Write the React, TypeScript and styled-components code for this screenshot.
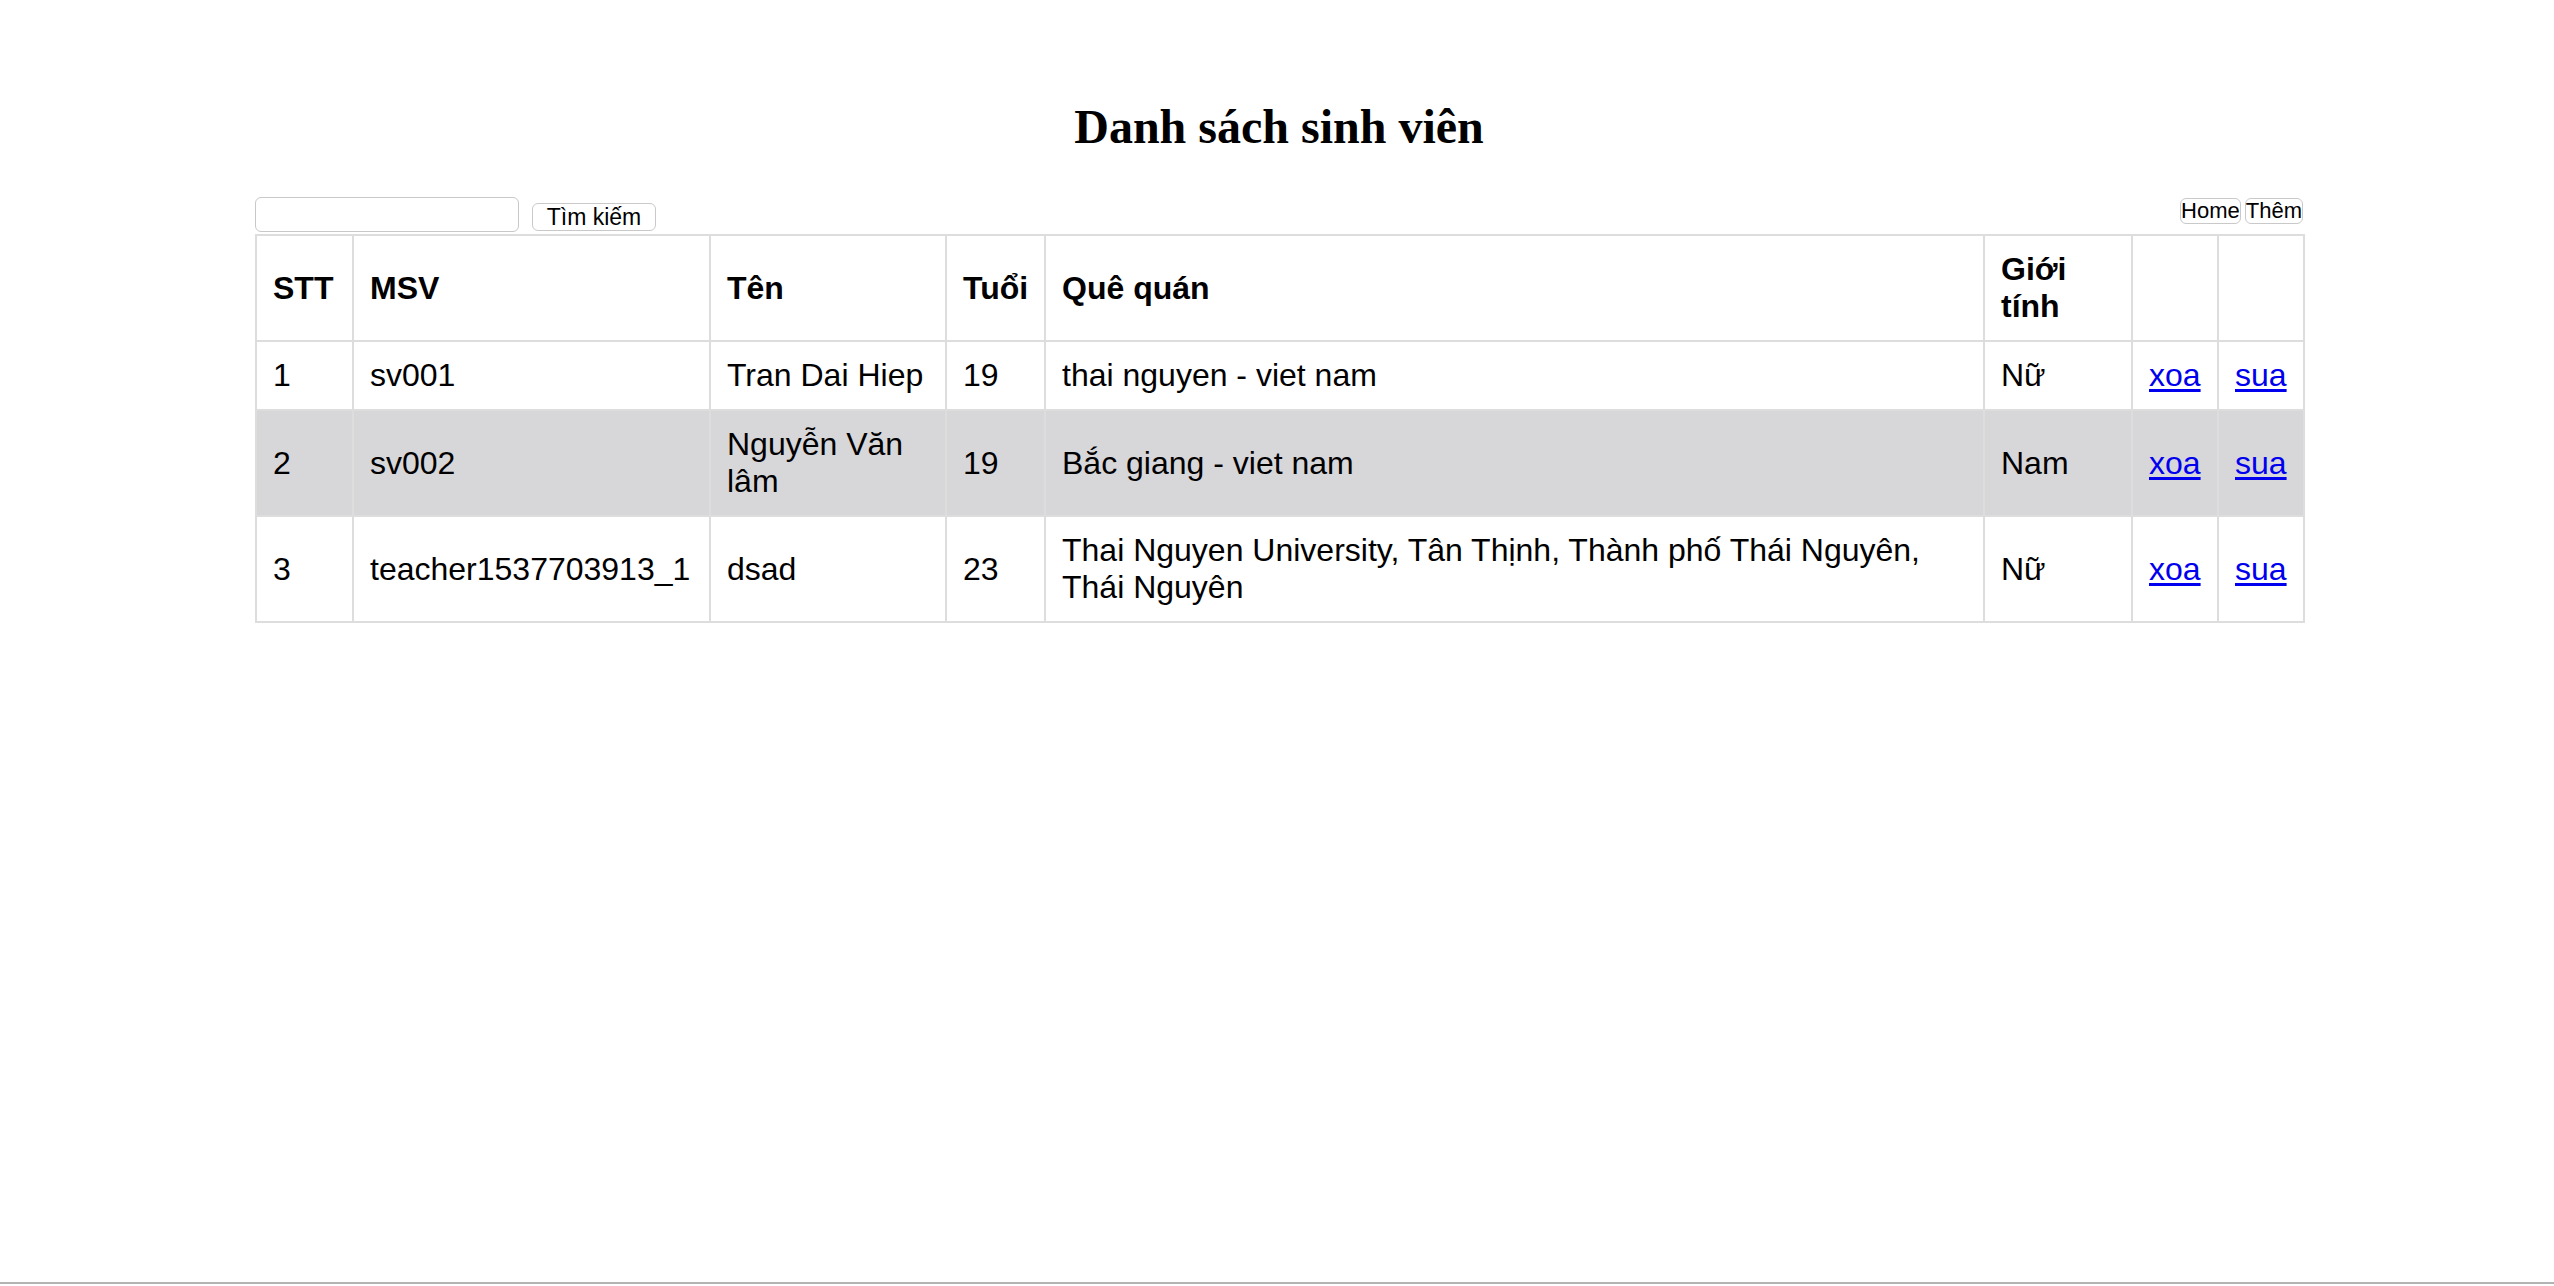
import React from "react";
import styled, { createGlobalStyle } from "styled-components";

const GlobalStyle = createGlobalStyle`
  html, body {
    margin: 0;
    padding: 0;
    background: #ffffff;
  }
  body {
    font-family: "Liberation Sans", Arial, sans-serif;
    color: #000;
  }
  * { box-sizing: border-box; }
`;

const Page = styled.div`
  height: 1286px;
  display: flex;
  flex-direction: column;
  overflow: hidden;
`;

const Main = styled.main`
  width: 2048px;
  margin-left: 255px;
  padding-top: 99px;
  display: flex;
  flex-direction: column;
`;

const Title = styled.h1`
  margin: 0 0 43px;
  font-family: "Liberation Serif", "Times New Roman", serif;
  font-weight: bold;
  font-size: 48px;
  text-align: center;
`;

const Toolbar = styled.div`
  display: flex;
  justify-content: space-between;
  align-items: flex-start;
  height: 37px;
`;

const SearchGroup = styled.form`
  display: flex;
  align-items: flex-end;
  gap: 13px;
  margin: 0;
`;

const SearchInput = styled.input`
  width: 264px;
  height: 35px;
  border: 1px solid #c8c8c8;
  border-radius: 6px;
  background: #fff;
  font-size: 21px;
  padding: 0 8px;
  outline: none;
`;

const Button = styled.button<{ $size?: number; $h?: number; $px?: number; $mb?: number }>`
  height: ${(p) => p.$h ?? 28}px;
  padding: 0 ${(p) => p.$px ?? 10}px;
  margin-bottom: ${(p) => p.$mb ?? 0}px;
  border: 1px solid #c9c9c9;
  border-radius: 6px;
  background: #fff;
  color: #000;
  font-family: "Liberation Sans", Arial, sans-serif;
  font-size: ${(p) => p.$size ?? 21}px;
  line-height: 1;
  cursor: pointer;
`;

const NavGroup = styled.div`
  display: flex;
  gap: 4px;
  margin-top: 1px;
`;

const Table = styled.table`
  width: 2048px;
  border-collapse: collapse;
  table-layout: fixed;
  font-size: 32px;
  border: 2px solid #dddddd;
`;

const Row = styled.tr<{ $alt?: boolean }>`
  background: ${(p) => (p.$alt ? "#d7d6d9" : "#ffffff")};
`;

const HeadCell = styled.th`
  border: 2px solid #dddddd;
  padding: 15px 16px;
  text-align: left;
  font-weight: bold;
  vertical-align: middle;
`;

const Cell = styled.td`
  border: 2px solid #dddddd;
  padding: 15px 16px;
  text-align: left;
  vertical-align: middle;
`;

const ActionLink = styled.a`
  color: #0000ee;
  text-decoration: underline;
  text-underline-offset: 3px;
`;

const Footer = styled.div`
  margin-top: auto;
  height: 2px;
  margin-bottom: 2px;
  background: #b3b3b3;
`;

const widths = [97, 357, 236, 99, 939, 148, 86, 86];

type Student = {
  id: number;
  msv: string;
  name: string;
  age: number;
  home: string;
  gender: string;
};

const students: Student[] = [
  { id: 1, msv: "sv001", name: "Tran Dai Hiep", age: 19, home: "thai nguyen - viet nam", gender: "Nữ" },
  { id: 2, msv: "sv002", name: "Nguyễn Văn lâm", age: 19, home: "Bắc giang - viet nam", gender: "Nam" },
  {
    id: 3,
    msv: "teacher1537703913_1",
    name: "dsad",
    age: 23,
    home: "Thai Nguyen University, Tân Thịnh, Thành phố Thái Nguyên, Thái Nguyên",
    gender: "Nữ",
  },
];

export default function App() {
  return (
    <Page>
      <GlobalStyle />
      <Main>
        <Title>Danh sách sinh viên</Title>
        <Toolbar>
          <SearchGroup onSubmit={(e) => e.preventDefault()}>
            <SearchInput type="text" />
            <Button type="submit" $size={23} $h={28} $px={0} $mb={1} style={{ width: 124 }}>
              Tìm kiếm
            </Button>
          </SearchGroup>
          <NavGroup>
            <Button type="button" $size={22} $h={26} $px={0}>Home</Button>
            <Button type="button" $size={22} $h={26} $px={0}>Thêm</Button>
          </NavGroup>
        </Toolbar>
        <Table>
          <colgroup>
            {widths.map((w, i) => (
              <col key={i} style={{ width: w }} />
            ))}
          </colgroup>
          <thead>
            <Row>
              <HeadCell>STT</HeadCell>
              <HeadCell>MSV</HeadCell>
              <HeadCell>Tên</HeadCell>
              <HeadCell>Tuổi</HeadCell>
              <HeadCell>Quê quán</HeadCell>
              <HeadCell>Giới tính</HeadCell>
              <HeadCell></HeadCell>
              <HeadCell></HeadCell>
            </Row>
          </thead>
          <tbody>
            {students.map((s, i) => (
              <Row key={s.id} $alt={i % 2 === 1}>
                <Cell>{s.id}</Cell>
                <Cell>{s.msv}</Cell>
                <Cell>{s.name}</Cell>
                <Cell>{s.age}</Cell>
                <Cell>{s.home}</Cell>
                <Cell>{s.gender}</Cell>
                <Cell>
                  <ActionLink href="#">xoa</ActionLink>
                </Cell>
                <Cell>
                  <ActionLink href="#">sua</ActionLink>
                </Cell>
              </Row>
            ))}
          </tbody>
        </Table>
      </Main>
      <Footer />
    </Page>
  );
}
